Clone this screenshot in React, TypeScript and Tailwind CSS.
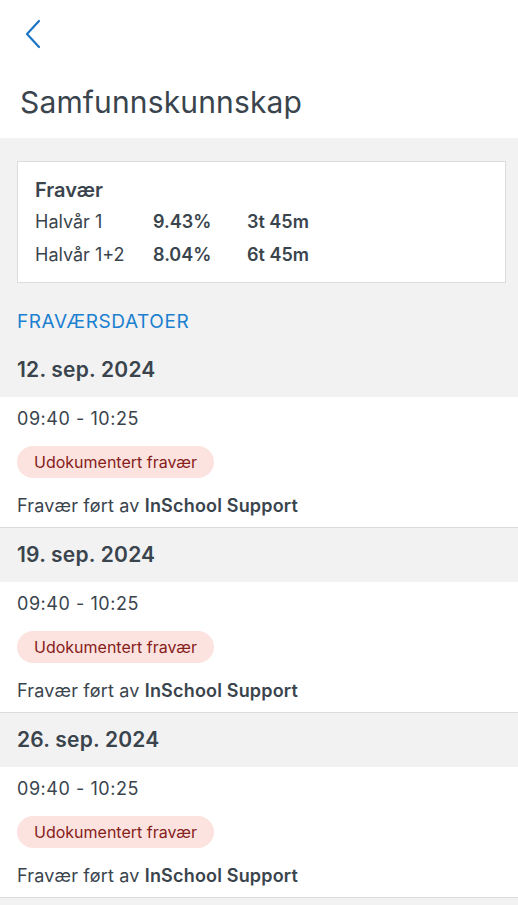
const entries = ["12. sep. 2024", "19. sep. 2024", "26. sep. 2024"];

export default function App() {
  return (
    <main className="min-h-screen bg-[#f2f2f2] text-[#3a444d] font-['Inter',sans-serif]">
      {/* Header */}
      <header className="bg-white pb-[18px]">
        <div className="h-[84px] pl-[24px] pt-[19px]">
          <svg width="18" height="30" viewBox="0 0 18 30" fill="none">
            <path d="M15 2 L3 15 L15 28" stroke="#1b75c4" strokeWidth="2.2" strokeLinecap="round" strokeLinejoin="round" />
          </svg>
        </div>
        <h1 className="px-[20px] text-[30px] leading-[36px] tracking-[0.005em]">Samfunnskunnskap</h1>
      </header>

      {/* Summary card */}
      <section className="pl-[17px] pr-[12px] pt-[23px]">
        <div className="bg-white border border-[#d9dde0] pl-[17px] pt-[15px] pb-[11px]">
          <h2 className="text-[20px] font-semibold leading-[26px] mb-[2px]">Fravær</h2>
          <div className="grid grid-cols-[118px_94px_auto] text-[18px] leading-[33px]">
            <span>Halvår 1</span>
            <span className="font-semibold">9.43%</span>
            <span className="font-semibold">3t 45m</span>
            <span>Halvår 1+2</span>
            <span className="font-semibold">8.04%</span>
            <span className="font-semibold">6t 45m</span>
          </div>
        </div>
      </section>

      <p className="px-[17px] pt-[27px] pb-[9px] text-[19px] leading-[24px] tracking-[0.03em] text-[#1b80d0]">FRAVÆRSDATOER</p>

      {/* Dates */}
      <ul>
        {entries.map((date) => (
          <li key={date} className="border-b border-[#dcdcdc]">
            <div className="h-[54px] flex items-center px-[17px] text-[21px] font-semibold tracking-[0.01em]">{date}</div>
            <div className="bg-white px-[17px] pt-[10px] pb-[9px]">
              <p className="text-[18px] leading-[24px] tracking-[0.03em]">09:40 - 10:25</p>
              <span className="inline-flex items-center h-[32px] mt-[15px] px-[17px] rounded-full bg-[#fde3df] text-[#86201a] text-[16px]">
                Udokumentert fravær
              </span>
              <p className="mt-[16px] text-[18px] leading-[24px] tracking-[0.01em]">
                Fravær ført av <span className="font-semibold">InSchool Support</span>
              </p>
            </div>
          </li>
        ))}
      </ul>
    </main>
  );
}
